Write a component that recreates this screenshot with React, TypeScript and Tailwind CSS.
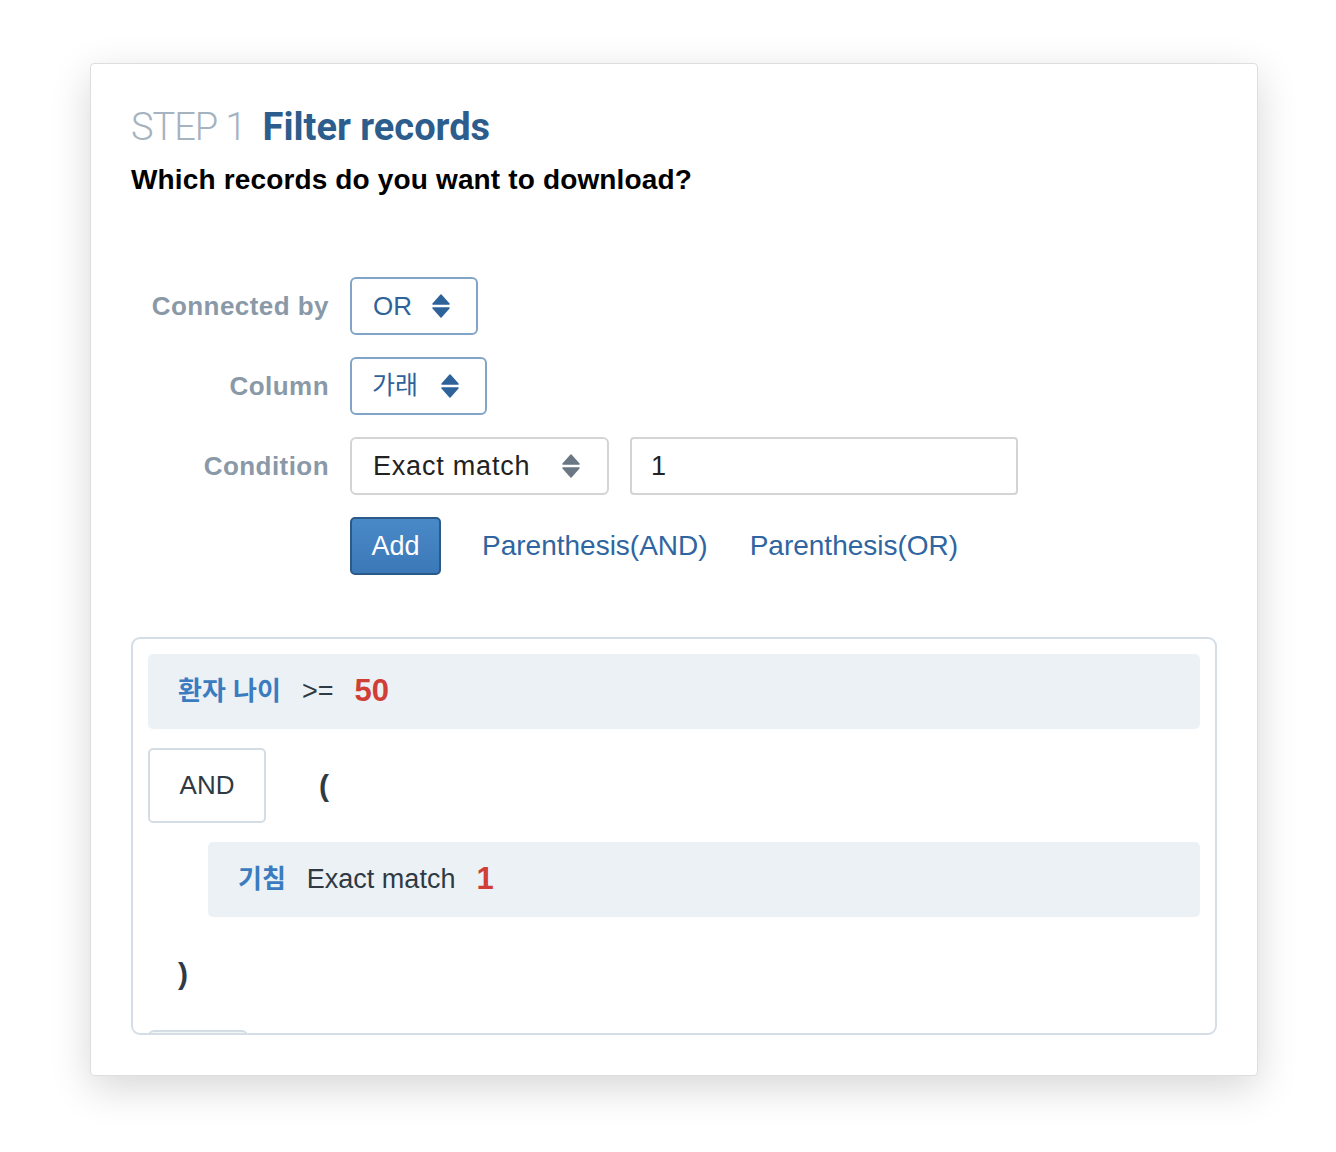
import React from 'react';

const SANS = "font-['Liberation_Sans','Noto_Sans_CJK_KR',sans-serif]";

function UpDown({ color }: { color: string }) {
  return (
    <svg width="18" height="24" viewBox="0 0 18 24" className="shrink-0">
      <path d="M9 1 L17 10 L1 10 Z" fill={color} strokeLinejoin="round" stroke={color} strokeWidth="1.5" />
      <path d="M1 14 L17 14 L9 23 Z" fill={color} strokeLinejoin="round" stroke={color} strokeWidth="1.5" />
    </svg>
  );
}

function Label({ children }: { children: React.ReactNode }) {
  return (
    <div className={`w-[198px] mr-[21px] text-right text-[26px] font-bold tracking-[0.45px] text-[#8a99a8] ${SANS}`}>
      {children}
    </div>
  );
}

function ConditionRow({ col, op, value, indent }: { col: string; op: string; value: string; indent?: boolean }) {
  return (
    <div className={`h-[75px] rounded-[5px] bg-[#ecf1f5] flex items-center pl-[30px] gap-[21px] ${indent ? 'ml-[60px]' : ''} ${SANS}`}>
      <span className="text-[26px] font-bold text-[#3b7cc0]">{col}</span>
      <span className="text-[27px] text-[#2f3a44]">{op}</span>
      <span className="text-[31px] font-bold text-[#cf3f37]">{value}</span>
    </div>
  );
}

export default function App() {
  return (
    <div className="min-h-[1152px] bg-white pt-[63px] pl-[90px]">
      <div className="w-[1168px] h-[1013px] bg-white border border-[#dedede] rounded-[4px] shadow-[0_12px_40px_rgba(0,0,0,0.16)] px-[40px] pt-[41px]">
        {/* Header */}
        <div className="flex items-baseline h-[44px] leading-[44px] font-['Roboto',sans-serif] text-[38px]">
          <span className="font-light text-[#a5b2bf] tracking-[-1px]">STEP 1</span>
          <span className="ml-[17px] font-bold text-[#2c5d8c]">Filter records</span>
        </div>
        <div className={`mt-[15px] h-[32px] leading-[32px] text-[28px] font-bold text-black tracking-[0.15px] ${SANS}`}>
          Which records do you want to download?
        </div>

        {/* Form */}
        <div className="mt-[81px] flex flex-col gap-[22px]">
          <div className="flex items-center">
            <Label>Connected by</Label>
            <div className={`h-[58px] w-[128px] border-2 border-[#82a5c7] rounded-[6px] flex items-center justify-between pl-[21px] pr-[26px] text-[26px] text-[#2e639a] ${SANS}`}>
              <span>OR</span>
              <UpDown color="#2e639a" />
            </div>
          </div>
          <div className="flex items-center">
            <Label>Column</Label>
            <div className={`h-[58px] w-[137px] border-2 border-[#82a5c7] rounded-[6px] flex items-center justify-between pl-[20px] pr-[26px] text-[25px] text-[#2e639a] ${SANS}`}>
              <span>가래</span>
              <UpDown color="#2e639a" />
            </div>
          </div>
          <div className="flex items-center">
            <Label>Condition</Label>
            <div className={`h-[58px] w-[259px] border-2 border-[#d4d4d4] rounded-[6px] flex items-center justify-between pl-[21px] pr-[27px] text-[27px] text-[#222] ${SANS}`}>
              <span className="tracking-[0.8px]">Exact match</span>
              <UpDown color="#6b7784" />
            </div>
            <div className={`ml-[21px] h-[58px] w-[388px] border-2 border-[#d4d4d4] rounded-[4px] flex items-center pl-[19px] text-[27px] text-[#222] ${SANS}`}>
              1
            </div>
          </div>
          <div className="flex items-center">
            <div className="w-[219px]" />
            <button className={`h-[58px] w-[91px] rounded-[5px] border-2 border-[#2c5a88] bg-gradient-to-b from-[#4a89c8] to-[#3b78b8] text-white text-[27px] ${SANS}`}>
              Add
            </button>
            <span className={`ml-[41px] text-[28px] text-[#2f65a0] ${SANS}`}>Parenthesis(AND)</span>
            <span className={`ml-[42px] text-[28px] text-[#2f65a0] ${SANS}`}>Parenthesis(OR)</span>
          </div>
        </div>

        {/* Results */}
        <div className="mt-[62px] h-[398px] border-2 border-[#d5dee6] rounded-[9px] p-[15px] overflow-hidden">
          <div className="flex flex-col gap-[19px]">
            <ConditionRow col="환자 나이" op=">=" value="50" />
            <div className="flex items-center h-[75px]">
              <div className={`h-[75px] w-[118px] border-2 border-[#d5dde4] rounded-[5px] flex items-center justify-center text-[26px] text-[#2f3a44] ${SANS}`}>
                AND
              </div>
              <span className={`ml-[53px] text-[30px] font-bold text-[#2f3a44] ${SANS}`}>(</span>
            </div>
            <ConditionRow col="기침" op="Exact match" value="1" indent />
            <div className={`h-[75px] flex items-center pl-[30px] text-[30px] font-bold text-[#2f3a44] ${SANS}`}>)</div>
            <div className="h-[75px] w-[100px] border-2 border-[#d5dde4] bg-[#f3f5f7] rounded-[6px]" />
          </div>
        </div>
      </div>
    </div>
  );
}
